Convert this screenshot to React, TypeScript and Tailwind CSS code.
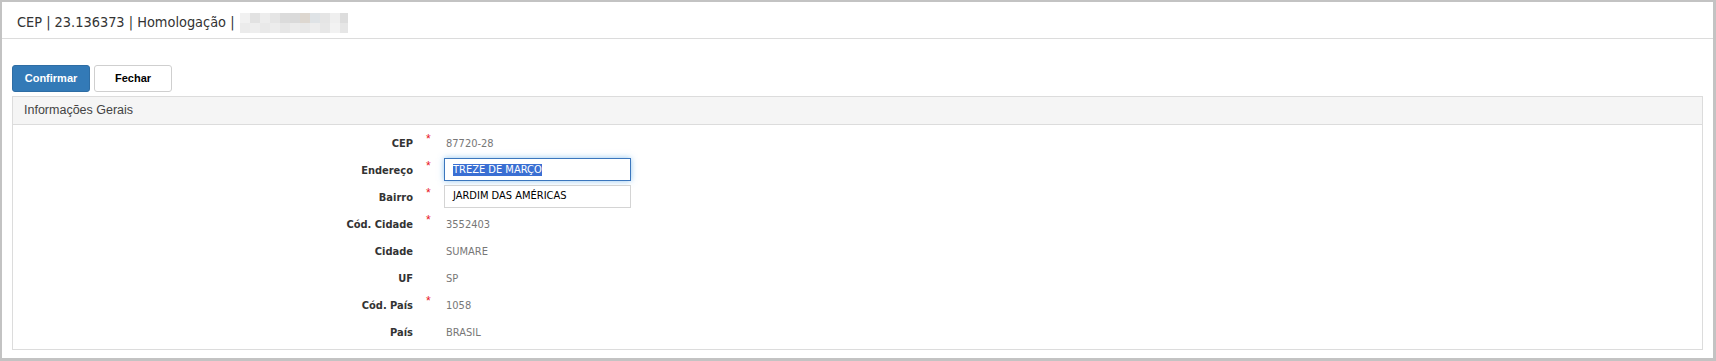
import React from 'react';

const tahoma = "font-['DejaVu_Sans_Condensed','DejaVu_Sans',sans-serif]";
const arial = "font-['Liberation_Sans',Arial,sans-serif]";

type Field = {
  label: string;
  value: string;
  required?: boolean;
  input?: 'focused' | 'plain';
};

const fields: Field[] = [
  { label: 'CEP', value: '87720-28', required: true },
  { label: 'Endereço', value: 'TREZE DE MARÇO', required: true, input: 'focused' },
  { label: 'Bairro', value: 'JARDIM DAS AMÉRICAS', required: true, input: 'plain' },
  { label: 'Cód. Cidade', value: '3552403', required: true },
  { label: 'Cidade', value: 'SUMARE' },
  { label: 'UF', value: 'SP' },
  { label: 'Cód. País', value: '1058', required: true },
  { label: 'País', value: 'BRASIL' },
];

// pixelated blur over the hidden part of the title
const blur = [
  ['#f1f1f1', '#e2e2e2', '#ededed', '#e5e5e5', '#dbdbdb', '#dadada', '#ddd7d0', '#dfe3e6', '#e5e5e5', '#efefef', '#dddddd'],
  ['#ebebeb', '#eeeeee', '#e9e9e9', '#ececec', '#e6e6e6', '#ebebeb', '#e8e8e8', '#ededed', '#e7e7e7', '#f2f2f2', '#e6e6e6'],
];

const Blurred: React.FC = () => (
  <svg width="108" height="20" className="ml-[5px]">
    {blur.map((row, r) =>
      row.map((c, i) => <rect key={`${r}-${i}`} x={i * 10} y={r * 10} width="10" height="10" fill={c} />)
    )}
  </svg>
);

const FieldRow: React.FC<{ f: Field }> = ({ f }) => (
  <div className="flex h-[27px]">
    <div className={`w-[400px] self-center text-right text-[11px] font-bold text-[#333] ${tahoma}`}>{f.label}</div>
    <div className="w-[31px] pl-[13px] pt-[2px]">
      {f.required && <span className={`block text-[12px] leading-none text-[#e8141c] ${arial}`}>*</span>}
    </div>
    {f.input === 'focused' && (
      <div className={`flex h-[23px] w-[187px] items-center border border-[#3b76bd] bg-white pl-[8px] shadow-[0_0_6px_rgba(102,175,233,0.7)] text-[11px] text-white ${tahoma}`}>
        <span className="bg-[#3a6fd3] leading-[12px]">{f.value}</span>
      </div>
    )}
    {f.input === 'plain' && (
      <div className={`flex h-[23px] w-[187px] items-center border border-[#d4d4d4] bg-white pl-[8px] text-[11px] text-black ${tahoma}`}>
        {f.value}
      </div>
    )}
    {!f.input && (
      <div className={`self-center pl-[2px] text-[11px] text-[#777] ${tahoma}`}>{f.value}</div>
    )}
  </div>
);

export default function App() {
  return (
    <div className="box-border h-[361px] w-[1716px] overflow-hidden border-t-2 border-l-2 border-r-[3px] border-b-[3px] border-[#c3c3c3] bg-white">
      <div className={`flex h-[37px] items-center border-b border-[#dcdcdc] pl-[15px] pt-[5px] text-[14.4px] text-[#333] ${tahoma}`}>
        <span>CEP | 23.136373 | Homologação |</span>
        <Blurred />
      </div>

      <div className="mt-[26px] flex gap-[4px] px-[10px]">
        <button className={`h-[27px] w-[78px] rounded-[3px] border border-[#2e6da4] bg-[#337ab7] text-[11px] font-bold text-white ${arial}`}>
          Confirmar
        </button>
        <button className={`h-[27px] w-[78px] rounded-[3px] border border-[#cfcfcf] bg-white text-[11px] font-bold text-black ${arial}`}>
          Fechar
        </button>
      </div>

      <div className="mx-[10px] mt-[4px] border border-[#dcdcdc]">
        <div className={`flex h-[28px] items-center border-b border-[#dcdcdc] bg-[#f5f5f5] pl-[11px] text-[12.5px] text-[#444] ${arial}`}>
          Informações Gerais
        </div>
        <div className="pt-[6px] pb-[2px]">
          {fields.map((f) => (
            <FieldRow key={f.label} f={f} />
          ))}
        </div>
      </div>
    </div>
  );
}
